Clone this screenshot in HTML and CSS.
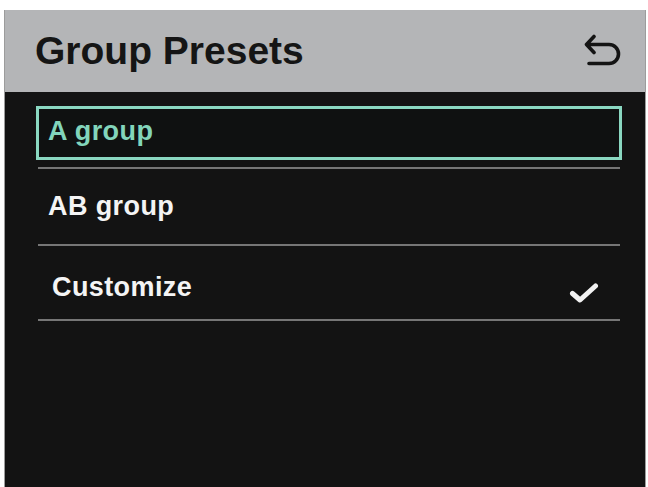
FILE: index.html
```html
<!DOCTYPE html>
<html lang="en">
<head>
    <meta charset="UTF-8">
    <meta name="viewport" content="width=device-width, initial-scale=1.0">
    <title>Group Presets</title>

    <link rel="stylesheet" href="styles.css">

</head>
<body>
    <div class="screen">
        <div class="header">
            <h1 class="title">Group Presets</h1>
            <svg class="back" width="38" height="33" viewBox="0 0 38 33">
                <path d="M10 2.5 L2.5 10.5 L10 18.5 M3 10.5 H25 A9.5 9.5 0 0 1 25 29.5 H5" fill="none" stroke="#141414" stroke-width="3.6" stroke-linecap="round" stroke-linejoin="round"/>
            </svg>
        </div>

        <div class="lista">
            <div class="item selecionado">
                <div class="caixa">A group</div>
            </div>
            <div class="item">
                <span class="nome">AB group</span>
            </div>
            <div class="item ultimo">
                <span class="nome">Customize</span>
                <svg class="check" width="30" height="23" viewBox="0 0 30 23">
                    <path d="M3.5 12.5 L11 19 L26.5 5" fill="none" stroke="#f2f2f2" stroke-width="5" stroke-linecap="round" stroke-linejoin="round"/>
                </svg>
            </div>
        </div>
    </div>
</body>
</html>
```

FILE: styles.css
```css
body
{
    margin: 0;
    background-color: #fff;
    font-family: "Liberation Sans", Arial, sans-serif;
}
.screen
{
    margin: 10px 0 0 4px;
    width: 640px;
    height: 477px;
    background-color: #131313;
    border-left: 1px solid #9c9c9c;
    border-right: 1px solid #9c9c9c;
    overflow: hidden;
}
.header
{
    height: 82px;
    background-color: #b4b5b7;
    display: flex;
    align-items: center;
    justify-content: space-between;
    padding: 0 23px 0 30px;
}
.title
{
    margin: 0;
    font-size: 39px;
    font-weight: bold;
    color: #151515;
}
.back
{
    margin-top: -2px;
}
.lista
{
    padding-top: 14px;
}
.item
{
    margin: 0 25px 0 33px;
    border-bottom: 2px solid #767676;
    display: flex;
    align-items: center;
    justify-content: space-between;
    font-size: 27px;
    font-weight: bold;
    letter-spacing: 0.4px;
    color: #f4f4f4;
    height: 75px;
    line-height: 75px;
}
.item .nome
{
    padding-left: 10px;
}
.item.selecionado
{
    height: 61px;
    align-items: flex-start;
}
.caixa
{
    flex: 1;
    height: 54px;
    box-sizing: border-box;
    margin: 0 -2px 0 -2px;
    border: 3px solid #8ad8c1;
    padding-left: 9px;
    line-height: 44px;
    color: #82d5bb;
    background-color: #0f1111;
}
.item.ultimo
{
    box-sizing: border-box;
    padding-top: 10px;
    line-height: 65px;
}
.item.ultimo .nome
{
    padding-left: 14px;
}
.check
{
    margin: 10px 21px 0 0;
}
```
